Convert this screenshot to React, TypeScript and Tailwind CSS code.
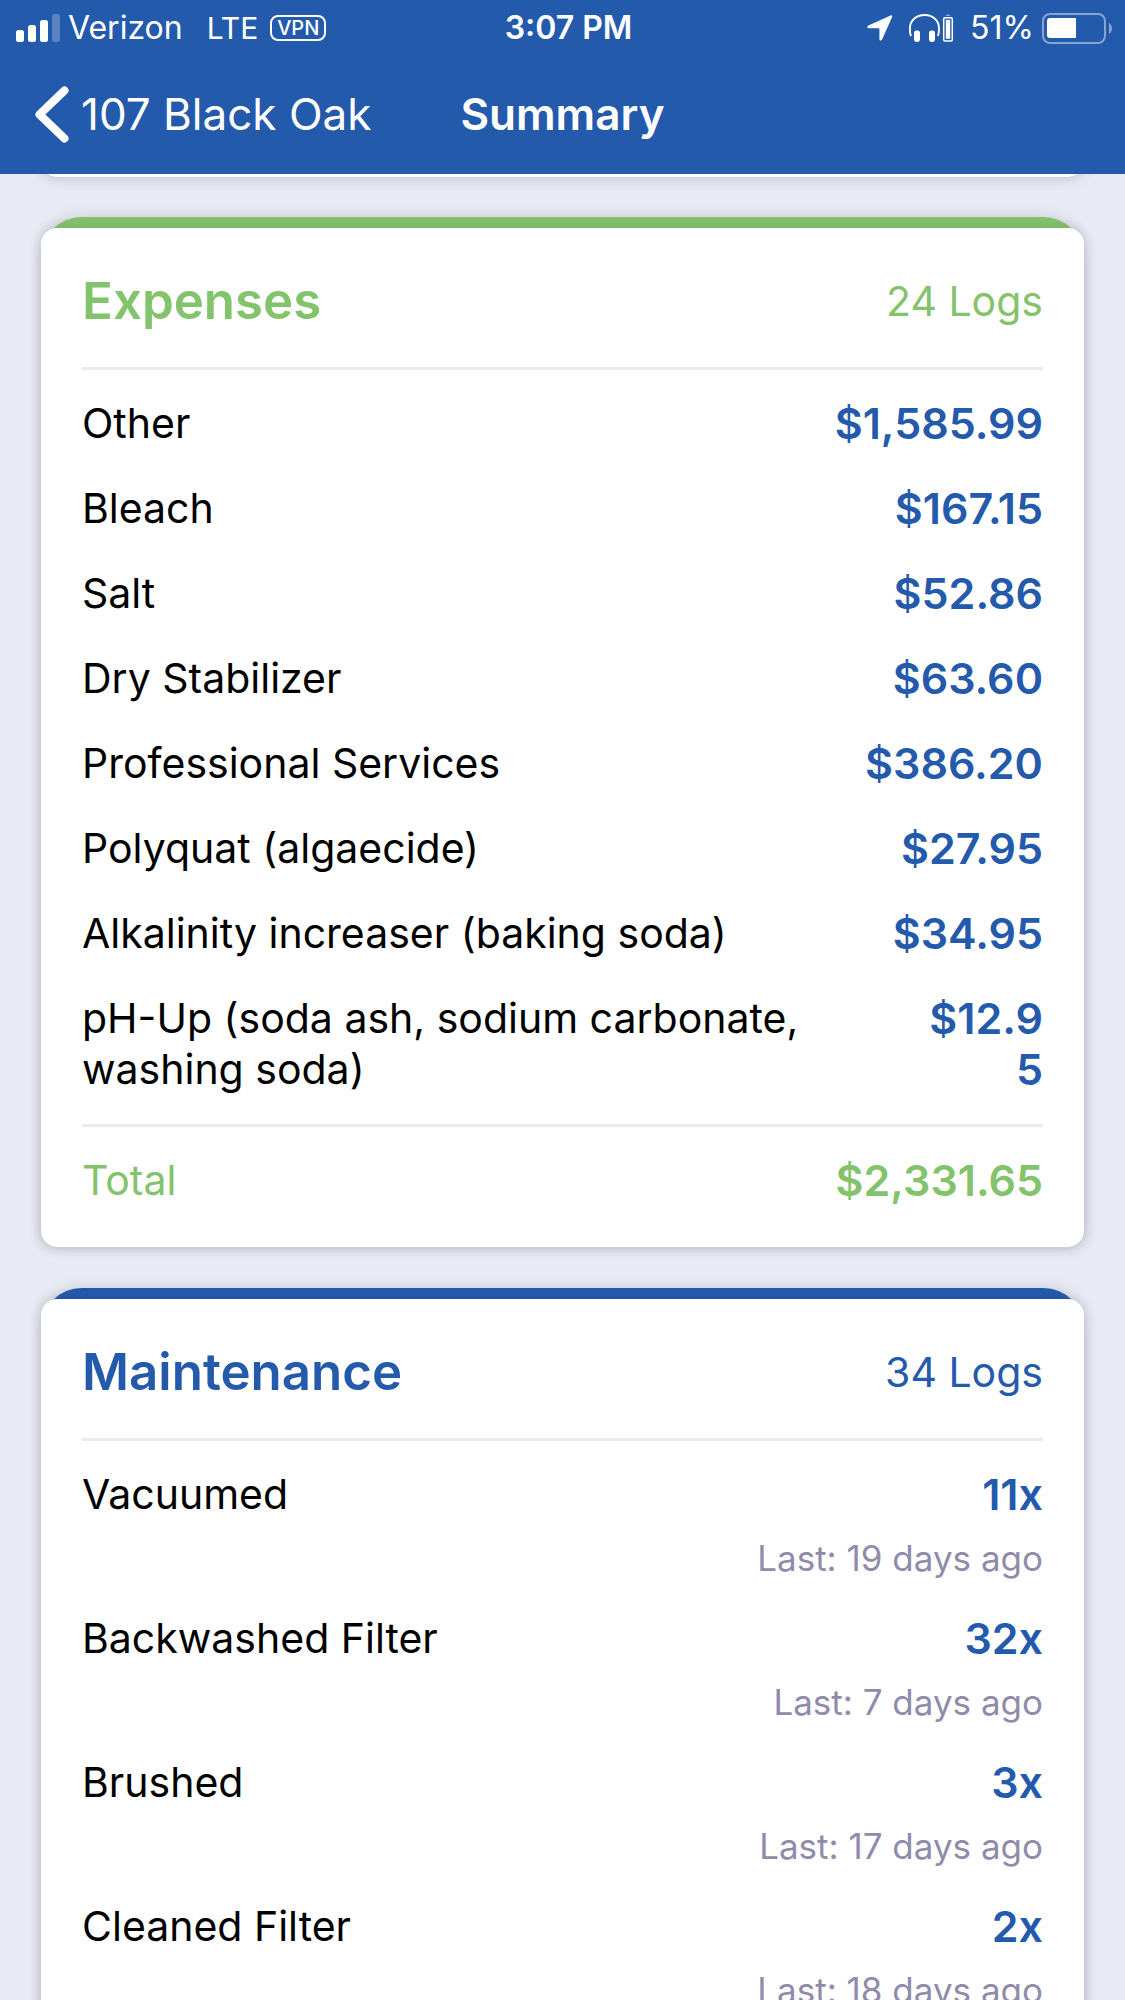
import type { ReactNode } from 'react'
import clsx from 'clsx'

interface Expense {
  name: string
  amount: string
}

interface MaintenanceTask {
  name: string
  count: number
  lastDays: number
}

const expenses: Expense[] = [
  { name: 'Other', amount: '$1,585.99' },
  { name: 'Bleach', amount: '$167.15' },
  { name: 'Salt', amount: '$52.86' },
  { name: 'Dry Stabilizer', amount: '$63.60' },
  { name: 'Professional Services', amount: '$386.20' },
  { name: 'Polyquat (algaecide)', amount: '$27.95' },
  { name: 'Alkalinity increaser (baking soda)', amount: '$34.95' },
  { name: 'pH-Up (soda ash, sodium carbonate, washing soda)', amount: '$12.95' },
]

const tasks: MaintenanceTask[] = [
  { name: 'Vacuumed', count: 11, lastDays: 19 },
  { name: 'Backwashed Filter', count: 32, lastDays: 7 },
  { name: 'Brushed', count: 3, lastDays: 17 },
  { name: 'Cleaned Filter', count: 2, lastDays: 18 },
]

function SignalIcon() {
  return (
    <svg width="44" height="28" viewBox="0 0 44 28" fill="white" aria-hidden="true">
      <rect x="0" y="16" width="8" height="12" rx="2.5" />
      <rect x="12" y="11" width="8" height="17" rx="2.5" />
      <rect x="24" y="6" width="8" height="22" rx="2.5" />
      <rect x="36" y="0" width="8" height="28" rx="2.5" opacity="0.25" />
    </svg>
  )
}

function LocationIcon() {
  return (
    <svg width="26" height="26" viewBox="0 0 26 26" fill="white" aria-hidden="true">
      <path d="M23.6.4 1.4 10.6C-.4 11.5.1 13.2 1.8 13.2H11.4c.7 0 1 .3 1 1V24c0 1.8 1.9 2.2 2.7.5L25 2.3C25.6.9 24.8-.1 23.6.4Z" />
    </svg>
  )
}

function HeadphonesIcon() {
  return (
    <svg width="45" height="28" viewBox="0 0 45 28" fill="none" aria-hidden="true">
      <path d="M2 22C.8 19.5.9 16.5.9 14.5.9 6.5 7 1 15.5 1S30 6.500 30 14.500c0 2 .1 5-1.100 7.500" stroke="white" strokeWidth="1.9" />
      <rect x="5" y="16.5" width="6" height="11.5" rx="2.4" fill="white" />
      <rect x="20" y="16.5" width="6" height="11.5" rx="2.4" fill="white" />
      <path d="M36.5 1.6C37 .3 41 .3 41.5 1.6Z" fill="white" />
      <rect x="34.7" y="3.7" width="8.6" height="23.2" rx="1.2" stroke="white" strokeWidth="1.5" />
      <rect x="36.8" y="5.8" width="4.4" height="19" fill="white" />
    </svg>
  )
}

function BatteryIcon() {
  return (
    <svg width="71" height="31" viewBox="0 0 71 31" aria-hidden="true">
      <rect x="1" y="1" width="62" height="29" rx="7" fill="none" stroke="white" strokeWidth="2" opacity="0.45" />
      <path d="M8 5H34V25H8a3 3 0 0 1-3-3V8a3 3 0 0 1 3-3Z" fill="white" />
      <path d="M67 10c4 2.5 4 8.5 0 11Z" fill="white" opacity="0.45" />
    </svg>
  )
}

function StatusBar() {
  return (
    <div className="grid grid-cols-[1fr_auto_1fr] items-center pt-2 pr-1 pl-4 text-[32px] leading-[40px]">
      <div className="flex items-center">
        <SignalIcon />
        <span className="ml-2">Verizon</span>
        <span className="ml-6 text-[30px]">LTE</span>
        <span className="ml-3 rounded-lg border-2 border-white px-[5px] text-[20px] leading-[22px] font-medium">VPN</span>
      </div>
      <span className="font-semibold">3:07 PM</span>
      <div className="flex items-center justify-end pr-2">
        <LocationIcon />
        <span className="ml-4">
          <HeadphonesIcon />
        </span>
        <span className="ml-4">51%</span>
        <span className="ml-2">
          <BatteryIcon />
        </span>
      </div>
    </div>
  )
}

function NavBar() {
  return (
    <nav className="grid grid-cols-[1fr_auto_1fr] items-center pt-[38px] pb-[31px] text-[44px] leading-[57px]">
      <a href="#back" className="flex items-center pl-[35px]">
        <svg width="34" height="57" viewBox="0 0 34 57" fill="none" aria-hidden="true">
          <path d="M29.5 4.5 4.5 28.5 29.5 52.5" stroke="white" strokeWidth="8" strokeLinecap="round" strokeLinejoin="round" />
        </svg>
        <span className="ml-3 whitespace-nowrap">107 Black Oak</span>
      </a>
      <h1 className="font-semibold">Summary</h1>
    </nav>
  )
}

interface CardProps {
  title: string
  logs: number
  color: 'green' | 'blue'
  children: ReactNode
}

function Card({ title, logs, color, children }: CardProps) {
  return (
    <section
      className={clsx(
        'rounded-t-[41px] rounded-b-2xl pt-[11px] shadow-[0_0_14px_rgba(60,50,80,0.18)]',
        color === 'green' ? 'bg-[#83c36b]' : 'bg-[#245aab]',
      )}
    >
      <div className="rounded-2xl bg-white px-[41px] pb-[41px] shadow-[0_0_12px_rgba(60,50,80,0.18)]">
        <header
          className={clsx(
            'flex items-center justify-between border-b-3 border-[#eaeaf1] pt-[41px] pb-[34px]',
            color === 'green' ? 'text-[#83c36b]' : 'text-[#245aab]',
          )}
        >
          <h2 className="text-[51px] leading-[64px] font-semibold">{title}</h2>
          <span>{logs} Logs</span>
        </header>
        {children}
      </div>
    </section>
  )
}

export default function App() {
  return (
    <div className="flex h-screen flex-col overflow-hidden bg-[#e8eaf4] font-['Inter',sans-serif] text-[41px] leading-[51px] text-black">
      <header className="relative z-10 shrink-0 bg-[#245aab] text-white">
        <StatusBar />
        <NavBar />
      </header>

      <main className="min-h-0 flex-1 overflow-hidden px-[41px]">
        {/* Bottom edge of the card scrolled under the header */}
        <div className="-mt-[37px] mb-10 h-10 rounded-b-2xl bg-white shadow-[0_0_14px_rgba(60,50,80,0.28)]" />

        <div className="flex flex-col gap-[41px]">
          <Card title="Expenses" logs={24} color="green">
            <dl className="flex flex-col gap-[34px] pt-7 pb-[29px]">
              {expenses.map((expense) => (
                <div key={expense.name} className="flex justify-between">
                  <dt>{expense.name}</dt>
                  <dd className="min-w-0 text-right text-[43px] font-semibold break-all text-[#245aab]">{expense.amount}</dd>
                </div>
              ))}
            </dl>
            <div className="flex justify-between border-t-3 border-[#eaeaf1] pt-7 text-[#83c36b]">
              <span>Total</span>
              <span className="text-[43px] font-semibold">$2,331.65</span>
            </div>
          </Card>

          <Card title="Maintenance" logs={34} color="blue">
            <dl className="flex flex-col gap-[34px] pt-7">
              {tasks.map((task) => (
                <div key={task.name} className="flex justify-between">
                  <dt>{task.name}</dt>
                  <dd className="flex flex-col gap-[17px] text-right">
                    <span className="text-[43px] font-semibold text-[#245aab]">{task.count}x</span>
                    <span className="text-[35px] leading-[42px] text-[#908baa]">Last: {task.lastDays} days ago</span>
                  </dd>
                </div>
              ))}
            </dl>
          </Card>
        </div>
      </main>
    </div>
  )
}
